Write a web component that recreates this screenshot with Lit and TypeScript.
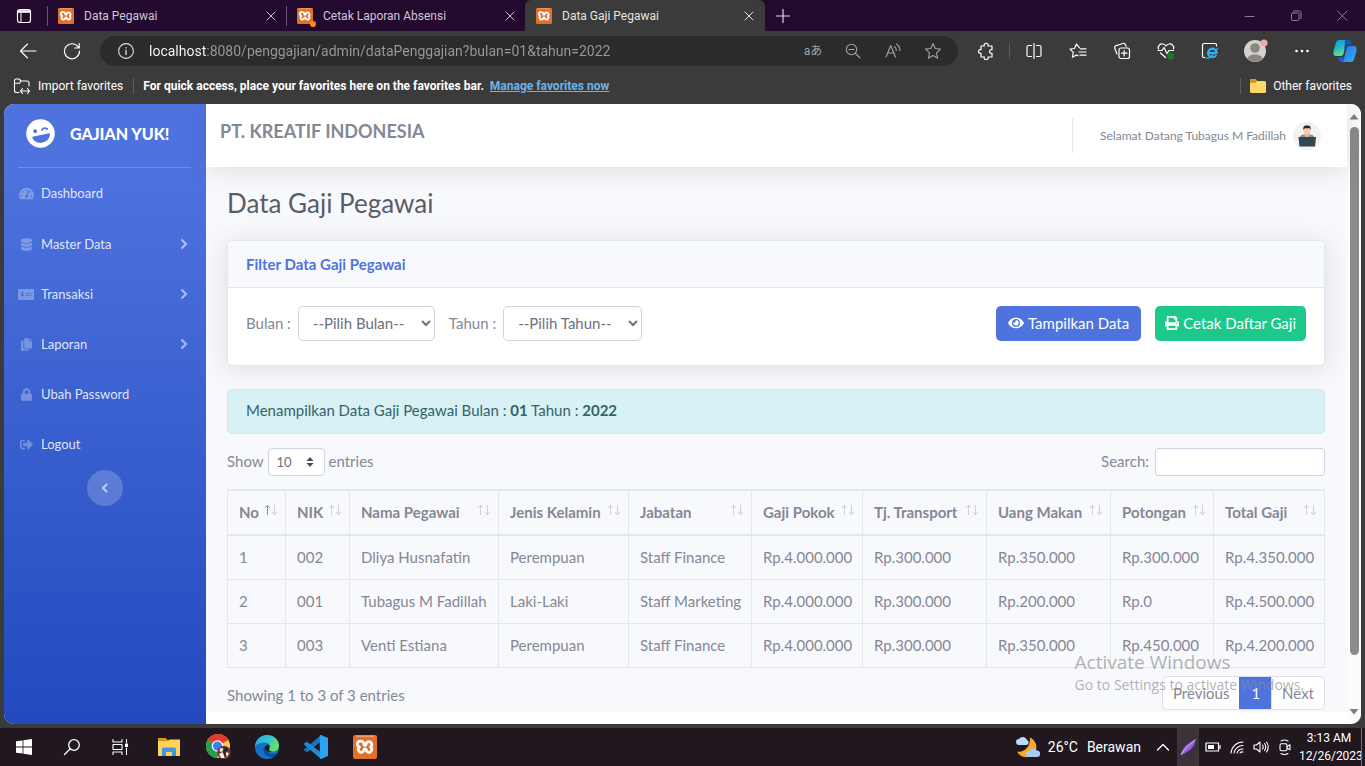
import { LitElement, html, css, svg, nothing } from "lit";
import { customElement, state } from "lit/decorators.js";

interface Column {
  label: string;
  width: number;
}

const COLUMNS: Column[] = [
  { label: "No", width: 58 },
  { label: "NIK", width: 64 },
  { label: "Nama Pegawai", width: 149 },
  { label: "Jenis Kelamin", width: 130 },
  { label: "Jabatan", width: 123 },
  { label: "Gaji Pokok", width: 111 },
  { label: "Tj. Transport", width: 124 },
  { label: "Uang Makan", width: 124 },
  { label: "Potongan", width: 103 },
  { label: "Total Gaji", width: 111 },
];

const ROWS: string[][] = [
  ["1", "002", "Dliya Husnafatin", "Perempuan", "Staff Finance", "Rp.4.000.000", "Rp.300.000", "Rp.350.000", "Rp.300.000", "Rp.4.350.000"],
  ["2", "001", "Tubagus M Fadillah", "Laki-Laki", "Staff Marketing", "Rp.4.000.000", "Rp.300.000", "Rp.200.000", "Rp.0", "Rp.4.500.000"],
  ["3", "003", "Venti Estiana", "Perempuan", "Staff Finance", "Rp.4.000.000", "Rp.300.000", "Rp.350.000", "Rp.450.000", "Rp.4.200.000"],
];

/* Solid glyphs: [view box width, path]; all are 512 units high. */
const GLYPHS: Record<string, [number, string]> = {
  gauge: [576, "M288 32C128.94 32 0 160.94 0 320c0 52.8 14.25 102.26 39.06 144.8 5.61 9.62 16.3 15.2 27.44 15.2h443c11.14 0 21.83-5.58 27.44-15.2C561.75 422.26 576 372.8 576 320c0-159.06-128.94-288-288-288zm0 64c14.71 0 26.58 10.13 30.32 23.65-1.11 2.26-2.64 4.23-3.45 6.67l-9.22 27.67c-5.13 3.49-10.97 6.01-17.64 6.01-17.67 0-32-14.33-32-32S270.33 96 288 96zM96 384c-17.67 0-32-14.33-32-32s14.33-32 32-32 32 14.33 32 32-14.33 32-32 32zm48-160c-17.67 0-32-14.33-32-32s14.33-32 32-32 32 14.33 32 32-14.33 32-32 32zm246.77-72.41l-61.33 184C343.13 347.33 352 364.54 352 384c0 11.72-3.38 22.55-8.88 32H232.88c-5.5-9.45-8.88-20.28-8.88-32 0-33.94 26.5-61.43 59.9-63.59l61.34-184.01c4.17-12.56 17.73-19.45 30.36-15.17 12.57 4.19 19.35 17.79 15.17 30.36zm14.66 57.2l15.52-46.55c3.47-1.29 7.13-2.23 11.05-2.23 17.67 0 32 14.33 32 32s-14.33 32-32 32c-11.38-.01-20.89-6.28-26.57-15.22zM480 384c-17.67 0-32-14.33-32-32s14.33-32 32-32 32 14.33 32 32-14.33 32-32 32z"],
  database: [448, "M448 73.143v45.714C448 159.143 347.667 192 224 192S0 159.143 0 118.857V73.143C0 32.857 100.333 0 224 0s224 32.857 224 73.143zM448 176v102.857C448 319.143 347.667 352 224 352S0 319.143 0 278.857V176c48.125 33.143 136.208 48.572 224 48.572S399.874 209.143 448 176zm0 160v102.857C448 479.143 347.667 512 224 512S0 479.143 0 438.857V336c48.125 33.143 136.208 48.572 224 48.572S399.874 369.143 448 336z"],
  check: [640, "M24 32h592a24 24 0 0 1 24 24v400a24 24 0 0 1-24 24H24a24 24 0 0 1-24-24V56a24 24 0 0 1 24-24zM160 150v24c-60 8-60 70 0 84 30 8 24 34 0 34-16 0-28-6-38-14l-18 22c14 12 34 20 56 22v24h24v-24c64-10 62-76 4-92-34-8-24-32-2-32 14 0 24 4 34 12l16-24c-14-10-30-14-52-14v-22zM320 192v32h224v-32zM320 288v32h128v-32zM480 288v32h64v-32z"],
  copy: [448, "M320 448v40c0 13.255-10.745 24-24 24H24c-13.255 0-24-10.745-24-24V120c0-13.255 10.745-24 24-24h72v296c0 30.879 25.121 56 56 56h168zm0-344V0H152c-13.255 0-24 10.745-24 24v368c0 13.255 10.745 24 24 24h272c13.255 0 24-10.745 24-24V128H344c-13.2 0-24-10.8-24-24zm120.971-31.029L375.029 7.029A24 24 0 0 0 358.059 0H352v96h96v-6.059a24 24 0 0 0-7.029-16.97z"],
  lock: [448, "M400 224h-24v-72C376 68.2 307.8 0 224 0S72 68.2 72 152v72H48c-26.5 0-48 21.5-48 48v192c0 26.5 21.5 48 48 48h352c26.5 0 48-21.5 48-48V272c0-26.5-21.5-48-48-48zm-104 0H152v-72c0-39.7 32.3-72 72-72s72 32.3 72 72v72z"],
  logout: [512, "M497 273L329 441c-15 15-41 4.5-41-17v-96H152c-13.3 0-24-10.7-24-24v-96c0-13.3 10.7-24 24-24h136V88c0-21.4 25.9-32 41-17l168 168c9.3 9.4 9.3 24.6 0 34zM192 436v-40c0-6.6-5.4-12-12-12H96c-17.7 0-32-14.3-32-32V160c0-17.7 14.3-32 32-32h84c6.6 0 12-5.4 12-12V76c0-6.6-5.4-12-12-12H96c-53 0-96 43-96 96v192c0 53 43 96 96 96h84c6.6 0 12-5.4 12-12z"],
  eye: [576, "M572.52 241.4C518.29 135.59 410.93 64 288 64S57.68 135.64 3.48 241.41a32.35 32.35 0 0 0 0 29.19C57.71 376.41 165.07 448 288 448s230.32-71.64 284.52-177.41a32.35 32.35 0 0 0 0-29.19zM288 400a144 144 0 1 1 144-144 143.93 143.93 0 0 1-144 144zm0-240a95.31 95.31 0 0 0-25.31 3.79 47.85 47.85 0 0 1-66.9 66.9A95.78 95.78 0 1 0 288 160z"],
  print: [512, "M448 192V77.25c0-8.49-3.37-16.62-9.37-22.63L393.37 9.37c-6-6-14.14-9.37-22.63-9.37H96C78.33 0 64 14.33 64 32v160c-35.35 0-64 28.65-64 64v112c0 8.84 7.16 16 16 16h48v96c0 17.67 14.33 32 32 32h320c17.67 0 32-14.33 32-32v-96h48c8.84 0 16-7.16 16-16V256c0-35.35-28.65-64-64-64zm-64 256H128v-96h256v96zm0-224H128V64h192v48c0 8.84 7.16 16 16 16h48v96zm48 72c-13.25 0-24-10.75-24-24 0-13.26 10.75-24 24-24s24 10.74 24 24c0 13.25-10.75 24-24 24z"],
};

const glyph = (name: string, height = 14) => {
  const [w, d] = GLYPHS[name];
  return html`<svg aria-hidden="true" height=${height} width=${Math.round((height * w) / 512)} viewBox="0 0 ${w} 512">
    <path fill="currentColor" fill-rule="evenodd" d=${d}></path>
  </svg>`;
};

/* Stroked outline icon on a square grid. */
const line = (size: number, body: unknown, width = 1) => html`<svg
  aria-hidden="true" width=${size} height=${size} viewBox="0 0 ${size} ${size}"
  fill="none" stroke="currentColor" stroke-width=${width} stroke-linecap="round" stroke-linejoin="round">${body}</svg>`;

const angle = (d: string) => html`<svg aria-hidden="true" width="8" height="12" viewBox="0 0 8 12" fill="none" stroke="currentColor" stroke-width="2.2"><path d=${d}></path></svg>`;

const xampp = (size: number) => html`<svg aria-hidden="true" width=${size} height=${size} viewBox="0 0 24 24">
  <rect width="24" height="24" rx="2" fill="#e0702a"></rect>
  <rect x="3" y="0.6" width="18" height="1.2" fill="#f3a878"></rect>
  <path d="M8 6.200a2.900 2.900 0 0 1 2.900 2.900c0 .9.4 1.200 1.100 1.200s1.100-.3 1.100-1.200A2.900 2.900 0 1 1 17.500 12a2.900 2.900 0 1 1-4.400 3.200c0-.9-.4-1.200-1.100-1.200s-1.100.3-1.100 1.200A2.900 2.900 0 1 1 6.500 12 2.900 2.900 0 0 1 8 6.200z"
    fill="none" stroke="#fff" stroke-width="2.800" stroke-linejoin="round"></path>
</svg>`;

const closeMark = line(10, svg`<path d="M1 1l8 8M9 1l-8 8"></path>`);

const NAV = [
  { icon: "gauge", label: "Dashboard", more: false },
  { icon: "database", label: "Master Data", more: true },
  { icon: "check", label: "Transaksi", more: true },
  { icon: "copy", label: "Laporan", more: true },
  { icon: "lock", label: "Ubah Password", more: false },
  { icon: "logout", label: "Logout", more: false },
];

@customElement("app-root")
export class AppRoot extends LitElement {
  static styles = css`
    :host {
      display: flex;
      flex-direction: column;
      min-height: 100vh;
      background: #3b3b3b;
      color: #fff;
      font-family: Roboto, "Noto Sans", "Noto Sans CJK JP", sans-serif;
      font-size: 12px;
      line-height: 16px;
    }
    * { box-sizing: border-box; }
    button, input, select { font: inherit; color: inherit; }
    button { border: 0; padding: 0; margin: 0; background: none; display: inline-flex; align-items: center; justify-content: center; }
    svg { display: block; flex: none; }
    a { color: inherit; text-decoration: none; }

    /* window frame */
    .titlebar { display: flex; height: 31px; background: #24092f; color: #cfc6d3; }
    .titlebar .lead { width: 47px; color: #fff; }
    .tab { display: flex; align-items: center; width: 239px; padding: 0 10px; border-left: 1px solid #6b5474; margin: 6px 0 5px; gap: 10px; }
    .tab.current { margin: 0; border-left: 0; width: 240px; padding: 0 11px; border-radius: 6px 6px 0 0; background: #3b3b3b; color: #e4e4e4; }
    .tab .name { flex: 1; text-align: left; justify-content: flex-start; white-space: nowrap; }
    .fav { position: relative; }
    .fav .dot { position: absolute; right: -3px; bottom: -3px; width: 6px; height: 6px; border-radius: 50%; background: #ff8c1a; }
    .plus { width: 35px; color: #e0d8e4; }
    .grow { flex: 1; }
    .frame { width: 46px; color: #8c7a94; }

    .toolbar { display: flex; align-items: center; height: 40px; padding-left: 6px; }
    .tool { width: 44px; height: 32px; }
    .tool.avatar { width: 48px; }
    .tool.copilot { width: 41px; }
    .rule { width: 1px; height: 16px; margin: 0 2px 0 1px; background: #5d5d5d; }
    .address { flex: 1; display: flex; align-items: center; height: 30px; margin: 0 6px; padding: 0 5px 0 18px; border-radius: 15px; background: #2b2b2b; }
    .address input {
      flex: 1; min-width: 0; margin-left: 15px; padding: 0; border: 0; outline: 0; font-size: 14px; line-height: 20px;
      color: transparent; background: linear-gradient(90deg, #fff 57px, #9a9a9a 57px); background-clip: text; -webkit-background-clip: text;
    }
    .address button { width: 40px; height: 30px; color: #a3a3a3; }
    .address .info { width: 16px; color: #e0e0e0; }

    .favorites { display: flex; align-items: center; height: 33px; padding: 0 13px 4px; white-space: nowrap; }
    .favorites .entry { gap: 7px; }
    .favorites .rule { margin: 0 9px 0 10px; }
    .favorites b { font-weight: 700; }
    .favorites .manage { margin-left: 6px; color: #6cb2ee; font-weight: 700; text-decoration: underline; }
    .favorites .rule.end { margin: 0 9px; }

    /* page */
    .page { position: relative; flex: 1; display: flex; margin: 0 4px 4px; border-radius: 10px; overflow: hidden; background: #fff; color: #858796; font-family: Lato, "Open Sans", sans-serif; font-size: 15px; line-height: 22px; }
    .side { width: 202px; display: flex; flex-direction: column; background: linear-gradient(180deg, #4e73df 10%, #224abe 100%); color: #fff; }
    .brand { display: flex; align-items: center; height: 63px; padding: 0 14px 4px 22px; gap: 15px; font-size: 16px; font-weight: 900; white-space: nowrap; }
    .side .divider { margin: 0 15px 0 14px; border: 0; border-top: 1px solid rgba(255, 255, 255, 0.2); }
    .side nav { display: flex; flex-direction: column; padding-bottom: 2px; }
    .side nav a { display: grid; grid-template-columns: 16px 1fr auto; gap: 7px; align-items: center; height: 50px; padding: 0 18px 0 14px; font-size: 13px; line-height: 18px; color: rgba(255, 255, 255, 0.85); }
    .side nav a:nth-child(n + 2) { padding-top: 2px; }
    .side nav .ic { display: flex; justify-content: center; color: rgba(255, 255, 255, 0.3); }
    .side nav .more { color: rgba(255, 255, 255, 0.55); }
    .fold { align-self: center; width: 36px; height: 36px; border-radius: 50%; background: rgba(255, 255, 255, 0.2); color: rgba(255, 255, 255, 0.6); }

    .body { flex: 1; min-width: 0; display: flex; flex-direction: column; background: #fff; }
    .topbar { position: relative; display: flex; align-items: center; height: 63px; padding: 0 26px 0 14px; background: #fff; box-shadow: 0 2px 26px rgba(58, 59, 69, 0.15); }
    .topbar h2 { flex: 1; margin: 0; padding-bottom: 10px; font-size: 18px; line-height: 24px; font-weight: 700; }
    .topbar .split { width: 1px; height: 35px; margin-right: 27px; background: #e3e6f0; }
    .user { display: flex; align-items: center; gap: 7px; font-size: 12px; line-height: 16px; }
    .content { flex: 1; padding: 21px 22px 0 21px; background: #f8f9fc; }
    h1 { margin: 0 0 22px; font-size: 26px; line-height: 30px; font-weight: 400; color: #5a5c69; }
    .card { border: 1px solid #e3e6f0; border-radius: 5px; background: #fff; box-shadow: 0 2px 26px rgba(58, 59, 69, 0.15); }
    .card h3 { margin: 0; padding: 12px 18px; border-bottom: 1px solid #e3e6f0; border-radius: 5px 5px 0 0; background: #f8f9fc; color: #4e73df; font-size: 15px; line-height: 22px; font-weight: 700; }
    .filter { display: flex; align-items: center; padding: 18px 18px 24px; }
    .filter label { padding-bottom: 1px; }
    .filter select { height: 35px; margin: 0 14px 0 7px; padding: 0 0 1px 10px; border: 1px solid #d1d3e2; border-radius: 5px; background: #fff; color: #6e707e; }
    .filter .month { width: 137px; }
    .filter .year { width: 139px; }
    .btn { height: 35px; padding: 0 12px 2px; gap: 4px; border-radius: 5px; background: #4e73df; color: #fff; white-space: nowrap; }
    .btn.print { margin-left: 14px; padding: 0 10px 2px; background: #1cc88a; }
    .alert { margin: 23px 0 14px; padding: 9px 18px 12px; border: 1px solid #c7ebf1; border-radius: 5px; background: #d7f1f5; color: #36626c; }

    .controls { display: flex; align-items: center; justify-content: space-between; margin-bottom: 13px; }
    .controls label { display: flex; align-items: center; }
    .controls .word { padding-bottom: 2px; }
    .length { display: inline-grid; margin: 0 4px; align-items: center; }
    .length select { grid-area: 1 / 1; width: 57px; height: 28px; padding: 0 8px; border: 1px solid #d1d3e2; border-radius: 4px; background: #fff; appearance: none; font-size: 13px; color: #6e707e; }
    .length svg { grid-area: 1 / 1; justify-self: end; margin-right: 11px; pointer-events: none; }
    .search { width: 170px; height: 28px; margin-left: 6px; padding: 0 8px; border: 1px solid #d1d3e2; border-radius: 3px; background: #fff; }
    table { width: 100%; table-layout: fixed; border-collapse: separate; border-spacing: 0; border-left: 1px solid #e3e6f0; }
    th, td { padding: 0 10px 2px 11px; border-right: 1px solid #e3e6f0; border-bottom: 1px solid #e3e6f0; text-align: left; white-space: nowrap; }
    th { height: 47px; padding: 0 7px 2px 11px; border-top: 2px solid #e3e6f0; border-bottom-width: 2px; font-weight: 700; }
    th button { width: 100%; justify-content: space-between; }
    th svg { margin: 0 0 4px; }
    td { height: 44px; }
    .below { display: flex; justify-content: space-between; padding: 8px 0 2px; }
    .below p { margin: 0; padding-top: 8px; }
    .pager { display: flex; height: 34px; border: 1px solid #dddfeb; border-radius: 5px; background: #fff; overflow: hidden; }
    .pager button { padding: 0 10px 1px; border-left: 1px solid #dddfeb; }
    .pager button:first-child { border-left: 0; }
    .pager .on { margin: -1px 0; padding: 0 11px 1px; border-color: #4e73df; background: #4e73df; color: #fff; }
    .foot { height: 12px; }
    .scroll { width: 14px; display: flex; flex-direction: column; align-items: center; padding: 10px 0 9px; background: #fcfcfc; color: #7f7f7f; }
    .scroll .track { flex: 1; align-self: stretch; padding: 7px 2px 54px 3px; display: flex; }
    .scroll .thumb { flex: 1; border-radius: 5px; background: #8b8b8b; }
    .notice { position: absolute; right: 57px; bottom: 29px; margin: 0; color: rgba(140, 140, 140, 0.68); font-family: "Open Sans", "Noto Sans", sans-serif; font-size: 14px; line-height: 20px; pointer-events: none; white-space: nowrap; }
    .notice strong { display: block; font-size: 19px; line-height: 26px; font-weight: 400; }

    /* taskbar */
    .taskbar { display: flex; align-items: center; height: 38px; background: #20171f; }
    .task { width: 49px; height: 38px; }
    .task:nth-child(-n + 3) { width: 48px; }
    .weather { gap: 8px; font-size: 14px; margin-right: 10px; }
    .weather .temp { margin-right: 1px; }
    .tray { width: 24px; height: 38px; }
    .tray.pen { width: 22px; margin: 0 2px; background: #3b333a; }
    .clock { display: flex; flex-direction: column; width: 60px; margin: 0 2px; text-align: center; line-height: 18px; font-size: 12px; white-space: nowrap; }
    .edge { width: 4px; height: 38px; border-left: 1px solid #756e74; }
  `;

  @state() private sorted = 0;

  private renderTab(name: string, current = false, dot = false) {
    return html`<div class="tab ${current ? "current" : ""}">
      <span class="fav">${xampp(16)}${dot ? html`<i class="dot"></i>` : nothing}</span>
      <button class="name">${name}</button>
      <button aria-label="Close ${name}">${closeMark}</button>
    </div>`;
  }

  private renderChrome() {
    return html`
      <header class="titlebar">
        <button class="lead" aria-label="Tab actions">
          ${line(16, svg`<rect x="1.500" y="1.500" width="13" height="13" rx="2.500" stroke-width="1.200"></rect><path d="M2.500 3.500h11" stroke-width="2.400"></path><path d="M5 5v9"></path>`)}
        </button>
        ${this.renderTab("Data Pegawai")}
        ${this.renderTab("Cetak Laporan Absensi", false, true)}
        ${this.renderTab("Data Gaji Pegawai", true)}
        <button class="plus" aria-label="New tab">${line(14, svg`<path d="M7 .5v13M.5 7h13"></path>`, 1.2)}</button>
        <span class="grow"></span>
        <button class="frame" aria-label="Minimize">${line(12, svg`<path d="M1 6.500h9"></path>`)}</button>
        <button class="frame" aria-label="Restore">${line(12, svg`<rect x="1.500" y="3" width="7.500" height="7.500" rx="1.200"></rect><path d="M3.500 1h5.500a2 2 0 0 1 2 2v5.500"></path>`)}</button>
        <button class="frame" aria-label="Close">${line(12, svg`<path d="M1.500 1l9.500 9.500M11 1l-9.500 9.500"></path>`)}</button>
      </header>

      <div class="toolbar">
        <button class="tool" aria-label="Back">${line(18, svg`<path d="M17 9H1.500M8.500 2L1.500 9l7 7"></path>`, 1.1)}</button>
        <button class="tool" aria-label="Refresh">${line(18, svg`<path d="M15.500 5.500A7.500 7.500 0 1 0 16.500 9M16.200 1.500v4.500h-4.500"></path>`, 1.2)}</button>
        <div class="address">
          <button class="info" aria-label="Site information">${line(16, svg`<circle cx="8" cy="8" r="7.400"></circle><path d="M8 7.200v4.300M8 4.700v.2" stroke-width="1.300"></path>`, 1.1)}</button>
          <input aria-label="Address" value="localhost:8080/penggajian/admin/dataPenggajian?bulan=01&tahun=2022" />
          <button aria-label="Translate">aあ</button>
          <button aria-label="Zoom">${line(16, svg`<circle cx="6.500" cy="6.500" r="5.200"></circle><path d="M10.500 10.500l4.500 4.500M4 6.500h5"></path>`, 1.1)}</button>
          <button aria-label="Read aloud">${line(16, svg`<path d="M1 14L5.700 2.500 10.500 14M2.600 10h6.400M9.500 3.500q1.800 1.500 1.800 4M11.500 1q3.500 2.500 3.500 6.500"></path>`, 1.1)}</button>
          <button aria-label="Add to favorites">${line(18, svg`<path d="M9 1.500l2.200 5 5.300.6-4 3.700 1.200 5.400L9 13.500l-4.700 2.700 1.200-5.400-4-3.700 5.300-.6z"></path>`, 1.1)}</button>
        </div>
        <button class="tool" aria-label="Extensions">${line(18, svg`<path d="M4 4h3.300a2 2 0 1 1 3.700 0h4v3.700a1.900 1.900 0 1 0 0 3.600V15h-4a2 2 0 1 1-3.700 0H4v-3.700a1.900 1.900 0 1 1 0-3.600z"></path>`, 1.2)}</button>
        <span class="rule"></span>
        <button class="tool" aria-label="Split screen">${line(18, svg`<path d="M6.500 3.500H3.500a1.500 1.500 0 0 0-1.500 1.500v8a1.500 1.500 0 0 0 1.500 1.500h3M11.500 3.500h3A1.500 1.500 0 0 1 16 5v8a1.500 1.500 0 0 1-1.500 1.500h-3M9 1.500v15"></path>`, 1.2)}</button>
        <button class="tool" aria-label="Favorites">${line(18, svg`<path d="M10.500 5.800L7.500 2 5.500 6.500l-4.500.5 3.300 3.300-.9 5 4.100-2.400 1.500.8M11.500 6.800H17M10 10h7M11 13.200h6"></path>`, 1.2)}</button>
        <button class="tool" aria-label="Collections">${line(18, svg`<path d="M4 12L1.800 6.200a2 2 0 0 1 1.300-2.600L10 1.500a2 2 0 0 1 2.500 1.200l.6 1.500"></path><rect x="6" y="6" width="10.500" height="10.500" rx="2"></rect><path d="M11.200 8.500v5.500M8.500 11.200H14"></path>`, 1.2)}</button>
        <button class="tool" aria-label="Browser essentials">${line(18, svg`<path d="M1.500 7C.5 3.500 3.500 1.500 6 2c1.500.2 2.500 1.200 3 2 .5-.8 1.500-1.800 3-2 2.500-.5 5.500 1.500 4.500 5M1 8.500h4l2-3 3 6 2-3h4.500M3.500 11l5 4.500"></path><circle cx="13.500" cy="14" r="3.600" fill="#1b7a25" stroke="none"></circle>`, 1.2)}</button>
        <button class="tool" aria-label="Internet Explorer mode">${line(18, svg`<path d="M4 15.500H3a1.500 1.500 0 0 1-1.500-1.500V3A1.500 1.500 0 0 1 3 1.500h11A1.500 1.500 0 0 1 15.500 3v1"></path><path d="M7.500 11h8.200a4.300 4.300 0 1 0-.9 2.600" stroke="#31b3ee" stroke-width="2.200"></path><path d="M5.500 16c1.500 2 8-4 11-9.500" stroke="#31b3ee"></path>`, 1.2)}</button>
        <button class="tool avatar" aria-label="Profile">
          <svg width="26" height="24" viewBox="0 0 26 24"><circle cx="12" cy="12" r="11" fill="#d4d2cf"></circle><circle cx="12" cy="9" r="4.800" fill="#8a8683"></circle><path d="M4.500 20c0-6 15-6 15 0a11 11 0 0 1-15 0z" fill="#8a8683"></path><circle cx="21" cy="4" r="3.600" fill="#f4a9a8"></circle></svg>
        </button>
        <button class="tool" aria-label="Settings and more"><svg width="16" height="16" viewBox="0 0 16 16" fill="#fff"><circle cx="2.500" cy="8" r="1.300"></circle><circle cx="8" cy="8" r="1.300"></circle><circle cx="13.500" cy="8" r="1.300"></circle></svg></button>
        <button class="tool copilot" aria-label="Copilot">
          <svg width="24" height="24" viewBox="0 0 24 24"><defs><linearGradient id="ca" x2=".3" y2="1"><stop offset="0" stop-color="#1a8ee8"></stop><stop offset=".5" stop-color="#22b7c4"></stop><stop offset="1" stop-color="#62dd8c"></stop></linearGradient><linearGradient id="cb" x2="1" y2="1"><stop offset="0" stop-color="#2a6fe0"></stop><stop offset="1" stop-color="#2fb6ff"></stop></linearGradient></defs>
          <path d="M6 1h8L10.500 14.500C10 16.300 9 17 7.500 17H3c-3 0-3-3-2-6.500l1.700-6C3.300 2.200 4.300 1 6 1z" fill="url(#ca)"></path><path d="M12 1h4c2 0 2.500 1.500 3 4.500h-3.500c-1.500 0-2.300.7-2.800 2L11 12z" fill="#1457b8"></path><path d="M16.500 7H21c3 0 3 3 2 6.500l-1.700 6C20.700 21.800 19.700 23 18 23h-8l3.500-13.500C14 7.700 15 7 16.500 7z" fill="url(#cb)"></path><path d="M5 18.500h4c1.200 0 2-.6 2.500-1.800L10 23H8.500C6.500 23 5.500 21.500 5 18.500z" fill="#1d5fd8"></path></svg>
        </button>
      </div>

      <div class="favorites">
        <button class="entry">${line(18, svg`<path d="M6 15.500H3.500a2 2 0 0 1-2-2v-10a1.500 1.500 0 0 1 1.500-1.500h3l2 2h6a2 2 0 0 1 2 2v3M1.500 6.200h5L8 4M7.500 14h9M9.500 11.500L7.500 14l2 2.500M14.500 11.500l2 2.500-2 2.500"></path>`, 1.1)}<span>Import favorites</span></button>
        <span class="rule"></span>
        <b>For quick access, place your favorites here on the favorites bar.</b>
        <a class="manage" href="#">Manage favorites now</a>
        <span class="grow"></span>
        <span class="rule end"></span>
        <button class="entry"><svg width="16" height="14" viewBox="0 0 16 14"><path d="M0 1.500A1.500 1.500 0 0 1 1.500 0h4L7 2h7.500A1.500 1.500 0 0 1 16 3.500v9a1.500 1.500 0 0 1-1.500 1.500h-13A1.500 1.500 0 0 1 0 12.500z" fill="#ffd768"></path><path d="M0 1.500A1.500 1.500 0 0 1 1.500 0h4L7 2 5.500 4H0z" fill="#c99a1c"></path></svg><span>Other favorites</span></button>
      </div>`;
  }

  private renderSidebar() {
    return html`<aside class="side">
      <a class="brand" href="#">
        <svg width="29" height="29" viewBox="0 0 29 29"><circle cx="14.500" cy="14.500" r="14.300" fill="#fff"></circle><g transform="rotate(-12 14.500 14.500)"><circle cx="9.800" cy="11" r="1.900" fill="#4e73df"></circle><path d="M16.500 11.500q2.800-3 5.600 0" fill="none" stroke="#4e73df" stroke-width="1.700" stroke-linecap="round"></path><path d="M6 16.500h17c-.5 9-16.500 9-17 0z" fill="#4e73df" stroke="#4e73df" stroke-linejoin="round"></path></g></svg>
        <span>GAJIAN YUK!</span>
      </a>
      <hr class="divider" />
      <nav>
        ${NAV.map((n) => html`<a href="#"><span class="ic">${glyph(n.icon, 13)}</span><span>${n.label}</span>${n.more ? html`<span class="more">${angle("M1.500 1.500L6 6l-4.500 4.500")}</span>` : nothing}</a>`)}
      </nav>
      <button class="fold" aria-label="Toggle sidebar">${angle("M6 2L2 6l4 4")}</button>
    </aside>`;
  }

  private sortMark(active: boolean) {
    return html`<svg aria-hidden="true" width="14" height="12" viewBox="0 0 14 12" fill="none" stroke="#858796">
      <path d="M3.500 11V1.500M1 4l2.500-2.700L6 4" stroke-opacity=${active ? 0.9 : 0.35}></path>
      <path d="M10.500 1v9.500M8 8l2.500 2.700L13 8" stroke-opacity="0.35"></path>
    </svg>`;
  }

  private renderContent() {
    return html`<main class="content">
      <h1>Data Gaji Pegawai</h1>
      <section class="card">
        <h3>Filter Data Gaji Pegawai</h3>
        <form class="filter" @submit=${(e: Event) => e.preventDefault()}>
          <label for="bulan">Bulan :</label>
          <select id="bulan" class="month"><option>--Pilih Bulan--</option></select>
          <label for="tahun">Tahun :</label>
          <select id="tahun" class="year"><option>--Pilih Tahun--</option></select>
          <span class="grow"></span>
          <button class="btn">${glyph("eye")}<span>Tampilkan Data</span></button>
          <button class="btn print" type="button">${glyph("print")}<span>Cetak Daftar Gaji</span></button>
        </form>
      </section>
      <div class="alert">Menampilkan Data Gaji Pegawai Bulan : <b>01</b> Tahun : <b>2022</b></div>
      <div class="controls">
        <label><span class="word">Show</span>
          <span class="length">
            <select aria-label="Entries per page"><option>10</option></select>
            <svg width="8" height="10" viewBox="0 0 8 10" fill="#4a4c57"><path d="M4 0l3.500 4h-7zM4 10l3.500-4h-7z"></path></svg>
          </span>
          <span class="word">entries</span></label>
        <label><span class="word">Search:</span><input class="search" type="search" /></label>
      </div>
      <table>
        <colgroup>${COLUMNS.map((c) => html`<col style="width:${c.width}px" />`)}</colgroup>
        <thead><tr>${COLUMNS.map((c, i) => html`<th scope="col"><button @click=${() => (this.sorted = i)}>${c.label}${this.sortMark(this.sorted === i)}</button></th>`)}</tr></thead>
        <tbody>${ROWS.map((r) => html`<tr>${r.map((v) => html`<td>${v}</td>`)}</tr>`)}</tbody>
      </table>
      <div class="below">
        <p>Showing 1 to 3 of 3 entries</p>
        <div class="pager"><button>Previous</button><button class="on">1</button><button>Next</button></div>
      </div>
    </main>`;
  }

  private renderTaskbar() {
    return html`<footer class="taskbar">
      <button class="task" aria-label="Start"><svg width="16" height="16" viewBox="0 0 16 16" fill="#fff"><path d="M0 2.300L6.600 1.400v6.200H0zM7.400 1.200L16 0v7.600H7.400zM0 8.400h6.600v6.200L0 13.700zM7.400 8.400H16V16l-8.600-1.200z"></path></svg></button>
      <button class="task" aria-label="Search">${line(18, svg`<circle cx="11" cy="7" r="5.300"></circle><path d="M7.200 10.800L1.500 16.500"></path>`, 1.3)}</button>
      <button class="task" aria-label="Task view">${line(18, svg`<path d="M2 1.500v2.500h9V1.500M2 16.500V14h9v2.500M2 6.500h9v5H2zM15.500 1.500v3M15.500 10v6.500"></path><rect x="14.500" y="6" width="2" height="2.500" fill="#fff"></rect>`, 1.1)}</button>
      <button class="task" aria-label="File Explorer"><svg width="22" height="20" viewBox="0 0 22 20"><path d="M0 1h8l1.500 2H22v4H0z" fill="#d99a12"></path><path d="M0 4h10l1.500-1.500H22V19H0z" fill="#ffd25c"></path><path d="M4 19v-7a1.500 1.500 0 0 1 1.500-1.500h11A1.500 1.500 0 0 1 18 12v7h-4v-4H8v4z" fill="#3f97dd"></path></svg></button>
      <button class="task" aria-label="Chrome"><svg width="26" height="26" viewBox="0 0 26 26"><circle cx="13" cy="12" r="12" fill="#ffce43"></circle><path d="M13 12L2.600 6a12 12 0 0 1 20.800 0z" fill="#e33b2e"></path><path d="M2.600 6A12 12 0 0 0 12 24l5-9-4-3z" fill="#229f4f"></path><circle cx="12.500" cy="12" r="5.800" fill="#fff"></circle><circle cx="12.500" cy="12" r="4.500" fill="#3a7ded"></circle><circle cx="19" cy="18.500" r="6.800" fill="#6f3930"></circle><circle cx="16.500" cy="16" r="2" fill="#e7ddd5"></circle><circle cx="21" cy="15.500" r="2" fill="#26222a"></circle><path d="M14 20l4-2 2 6-4 0zM20 18l4 1-2 4z" fill="#f2eeee"></path><path d="M17.500 17l2-3 1.500 5-1 5z" fill="#302426"></path></svg></button>
      <button class="task" aria-label="Edge"><svg width="24" height="24" viewBox="0 0 24 24"><defs><linearGradient id="ea" x2="1" y2=".5"><stop offset="0" stop-color="#26a7e8"></stop><stop offset=".6" stop-color="#34c8c9"></stop><stop offset="1" stop-color="#69e05c"></stop></linearGradient></defs><circle cx="12" cy="12" r="12" fill="#1671c5"></circle><path d="M0 12C0 5 5.500 0 12 0c7 0 12 5 12 10.500 0 4.500-3.500 6-6.500 6-3 0-4-1.200-3-2.500 2-3-.5-6.500-5-6.500S1 9 0 12z" fill="url(#ea)"></path><path d="M9.500 11c-3 5 1 11 7 11 3 0 5-2 6.500-4-2 1-4 1.300-6 1-4-.6-7-3.500-7.500-8z" fill="#0c4c91"></path><path d="M14 10c1 2 0 3-.3 4.500.5 1.500 2 2 4 2-4 1.500-7.700-1-7.700-4 0-1.500 2-3.500 4-2.500z" fill="#20171f"></path></svg></button>
      <button class="task" aria-label="Visual Studio Code"><svg width="24" height="24" viewBox="0 0 24 24"><path d="M17 0v6.500L3 17.300 0 15.500v-1z" fill="#1477b8"></path><path d="M0 8.500L3 6.800 17 17.500V24L0 9.500z" fill="#1e8ad2"></path><path d="M17 0l7 3v18l-7 3c-1 0-1.200-.5-1.200-1.200V1.200C15.800.5 16 0 17 0z" fill="#2aa5f3"></path></svg></button>
      <button class="task" aria-label="XAMPP">${xampp(24)}</button>
      <span class="grow"></span>
      <button class="weather"><svg width="25" height="22" viewBox="0 0 25 22"><path d="M15 1.500a10.200 10.200 0 1 1-13 14C9 17 15.500 11 15 1.500z" fill="#f8a72c"></path><path d="M4 9a3 3 0 0 1 0-6 4.500 4.500 0 0 1 8 1 2.600 2.600 0 0 1-.5 5z" fill="#bfd8f8"></path><path d="M14 21a3 3 0 0 1 0-6 4.500 4.500 0 0 1 8-.5 3.200 3.200 0 0 1 0 6.500z" fill="#a9caf4"></path></svg><span class="temp">26°C</span><span>Berawan</span></button>
      <button class="tray" aria-label="Show hidden icons">${line(14, svg`<path d="M1.500 10L7 4.500l5.500 5.500"></path>`, 1.3)}</button>
      <button class="tray pen" aria-label="Pen"><svg width="16" height="18" viewBox="0 0 16 18"><path d="M1 17C1 11 6 6 15.500 1.500 15 9 9 14 1 17z" fill="#9a5bd6"></path><path d="M1 17C5 11 9 7 15.500 1.500" stroke="#dcb8ff" fill="none"></path></svg></button>
      <button class="tray" aria-label="Battery">${line(16, svg`<path d="M1 4h12.500v8H1zM15 6.500v3"></path><rect x="3" y="6" width="6" height="4" fill="#fff" stroke="none"></rect>`, 1.2)}</button>
      <button class="tray" aria-label="Network">${line(14, svg`<path d="M1 13A12 12 0 0 1 13 2M4 13a9 9 0 0 1 9-7.500M7 13a6 6 0 0 1 6-4M10 13a3 3 0 0 1 3-1"></path>`, 1.1)}</button>
      <button class="tray" aria-label="Volume">${line(16, svg`<path d="M1 6h2.500L7 3v10l-3.500-3H1zM9.500 6q1.500 2 0 4M11.500 4.500q2.500 3.500 0 7M13.500 3q3.500 5 0 10"></path>`, 1.1)}</button>
      <button class="tray" aria-label="Meet now">${line(16, svg`<rect x="3" y="4.800" width="7" height="7" rx="1.500"></rect><path d="M10 7.500l3-1.700v5L10 9.300M4 2q3.500-2 7 0M4 14.500q3.500 2 7 0"></path>`, 1.1)}</button>
      <div class="clock"><span>3:13 AM</span><span>12/26/2023</span></div>
      <span class="edge"></span>
    </footer>`;
  }

  render() {
    return html`
      ${this.renderChrome()}
      <div class="page">
        ${this.renderSidebar()}
        <div class="body">
          <header class="topbar">
            <h2>PT. KREATIF INDONESIA</h2>
            <span class="split"></span>
            <a class="user" href="#"><span>Selamat Datang Tubagus M Fadillah</span>
              <svg width="28" height="28" viewBox="0 0 28 28"><circle cx="14" cy="14" r="14" fill="#f1f1f2"></circle><path d="M7 15c0-2 4-3 7-3s7 1 7 3v3H7z" fill="#8b8f93"></path><path d="M11.500 11h5v3l-2.500 1.500L11.500 14z" fill="#eab793"></path><ellipse cx="14" cy="8.500" rx="3.400" ry="4" fill="#f6c9a6"></ellipse><path d="M10.300 8C10 3.500 12 3.500 14.500 3.500S18 4.500 17.700 8l-.9-1.800h-5z" fill="#33251f"></path><path d="M5.500 15h17.500l-1 9.500H6.500z" fill="#33454f"></path></svg>
            </a>
          </header>
          ${this.renderContent()}
          <div class="foot"></div>
        </div>
        <div class="scroll" aria-hidden="true">
          <svg width="10" height="6" viewBox="0 0 10 6"><path d="M5 0l4.500 5.500h-9z" fill="currentColor"></path></svg>
          <div class="track"><div class="thumb"></div></div>
          <svg width="10" height="6" viewBox="0 0 10 6"><path d="M5 5.500L.5 0h9z" fill="currentColor"></path></svg>
        </div>
        <p class="notice"><strong>Activate Windows</strong>Go to Settings to activate Windows.</p>
      </div>
      ${this.renderTaskbar()}
    `;
  }
}
